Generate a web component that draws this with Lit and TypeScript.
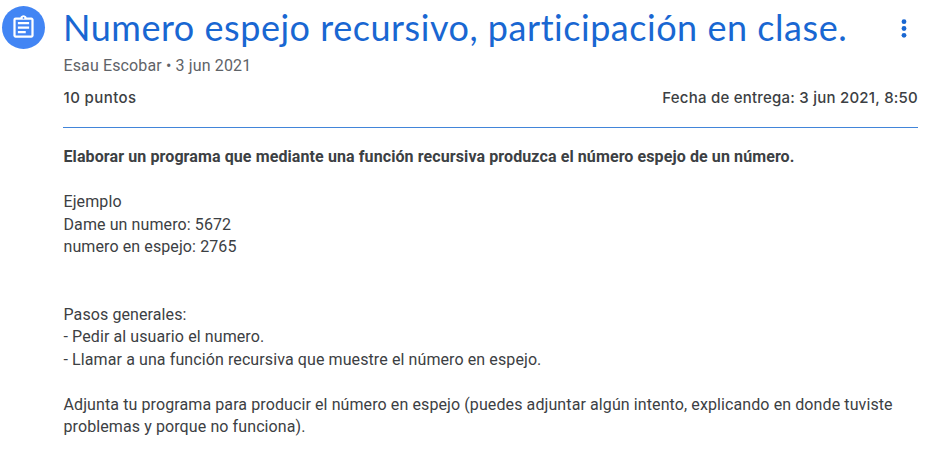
import { LitElement, html, css } from "lit";
import { customElement } from "lit/decorators.js";

@customElement("app-root")
export class AppRoot extends LitElement {
  static styles = css`
    :host { display: block; height: 449px; overflow: hidden; background: #fff; color: #3c4043; font-family: Roboto, sans-serif; font-size: 16px; }
    .page { display: grid; grid-template-columns: 45px 855px; column-gap: 18px; }
    .badge { width: 43px; height: 43px; margin: 5.5px 0 0 2px; border-radius: 50%; background: #4285f4; display: flex; align-items: center; justify-content: center; }
    .badge svg { width: 27px; height: 27px; fill: #fff; }
    .top { display: flex; justify-content: space-between; height: 56px; }
    h1 { margin: 4px 0 0; font: 400 36px/46px Lato, sans-serif; letter-spacing: 0.53px; color: #1967d2; white-space: nowrap; }
    .more { width: 24px; height: 24px; margin: 17px 2px 0 0; fill: #1967d2; }
    .author { height: 20px; line-height: 20px; color: #5f6368; letter-spacing: 0.13px; padding-left: 0.5px; }
    .meta { display: flex; justify-content: space-between; height: 52px; border-bottom: 1px solid #4285d9; box-sizing: border-box; padding: 11px 0 0 0.5px; font: 500 15px/22px Inter, sans-serif; letter-spacing: 0.23px; }
    .points { letter-spacing: 0.4px; }
    .body { padding: 18px 0 0 0.5px; line-height: 22.52px; letter-spacing: 0.1px; }
    .line { min-height: 22.52px; white-space: nowrap; }
    .bold { font-weight: 700; }
  `;
  render() {
    const lines = ["", "Ejemplo", "Dame un numero: 5672", "numero en espejo: 2765", "", "", "Pasos generales:", "- Pedir al usuario el numero.", "- Llamar a una función recursiva que muestre el número en espejo.", "", "Adjunta tu programa para producir el número en espejo (puedes adjuntar algún intento, explicando en donde tuviste", "problemas y porque no funciona)."];
    return html`<div class="page">
      <div class="badge"><svg viewBox="0 0 24 24"><path d="M7 15h7v2H7zm0-4h10v2H7zm0-4h10v2H7zM19 3h-4.18C14.4 1.84 13.3 1 12 1s-2.4.84-2.82 2H5a2 2 0 0 0-2 2v14c0 1.1.9 2 2 2h14c1.1 0 2-.9 2-2V5c0-1.1-.9-2-2-2zm-7-.25a.75.75 0 1 1 0 1.5.75.75 0 0 1 0-1.5zM19 19H5V5h14z"/></svg></div>
      <main>
        <div class="top"><h1>Numero espejo recursivo, participación en clase.</h1><svg class="more" viewBox="0 0 24 24"><circle cx="12" cy="4.7" r="2.4"/><circle cx="12" cy="11.5" r="2.4"/><circle cx="12" cy="18.3" r="2.4"/></svg></div>
        <div class="author">Esau Escobar • 3 jun 2021</div>
        <div class="meta"><span class="points">10 puntos</span><span>Fecha de entrega: 3 jun 2021, 8:50</span></div>
        <div class="body"><div class="line bold">Elaborar un programa que mediante una función recursiva produzca el número espejo de un número.</div>
        ${lines.map((l) => html`<div class="line">${l}</div>`)}</div>
      </main></div>`;
  }
}
